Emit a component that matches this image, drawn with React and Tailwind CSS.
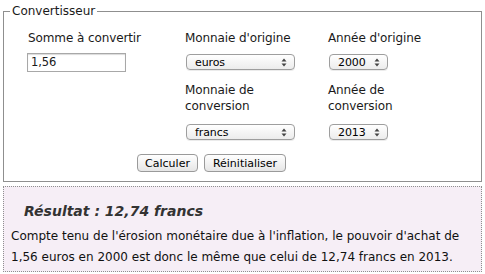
import React from "react";

const font = { fontFamily: '"DejaVu Sans", Verdana, sans-serif' };

function Arrows() {
  return (
    <svg width="6" height="9" viewBox="0 0 6 9" className="shrink-0">
      <path d="M3 0.5 L5.5 3.5 L0.5 3.5 Z" fill="#444" />
      <path d="M3 8.5 L5.5 5.5 L0.5 5.5 Z" fill="#444" />
    </svg>
  );
}

function FakeSelect({ value, w }) {
  return (
    <div
      className={`${w} h-[16px] flex items-center justify-between rounded-[4px] border border-[#9e9e9e] bg-gradient-to-b from-white to-[#ececec] pl-[8px] pr-[7px] text-[11px] leading-none text-black shadow-[0_1px_0_rgba(0,0,0,0.08)]`}
    >
      <span>{value}</span>
      <Arrows />
    </div>
  );
}

function Btn({ children, w }) {
  return (
    <div
      className={`${w} h-[18px] flex items-center justify-center rounded-[4px] border border-[#9a9a9a] bg-gradient-to-b from-white to-[#e6e6e6] text-[11px] leading-none text-black`}
    >
      {children}
    </div>
  );
}

export default function App() {
  return (
    <div style={font} className="w-[485px] h-[274px] bg-white px-[3px] pt-[4px] text-[#1a1a1a]">
      <fieldset className="w-[479px] h-[178px] border border-[#8f8f8f] px-[6px]">
        <legend className="px-[2px] text-[12px] leading-[15px]">Convertisseur</legend>
        <div className="grid grid-cols-[158px_143px_1fr] pl-[17px] pt-[12px] text-[12px] tracking-[-0.1px]">
          <div className="pl-[1px] leading-[15px]">Somme à convertir</div>
          <div className="leading-[15px]">Monnaie d'origine</div>
          <div className="leading-[15px]">Année d'origine</div>

          <div className="pt-[7px]">
            <div className="w-[99px] h-[19px] border border-[#a8a8a8] shadow-[inset_0_1px_1px_rgba(0,0,0,0.15)] pl-[3px] flex items-center text-[11.5px]">
              1,56
            </div>
          </div>
          <div className="pt-[8px] pl-[1px]">
            <FakeSelect value="euros" w="w-[109px]" />
          </div>
          <div className="pt-[8px] pl-[1px]">
            <FakeSelect value="2000" w="w-[59px]" />
          </div>

          <div />
          <div className="pt-[10px] leading-[16px]">
            Monnaie de
            <br />
            conversion
          </div>
          <div className="pt-[10px] leading-[16px]">
            Année de
            <br />
            conversion
          </div>

          <div />
          <div className="pt-[10px] pl-[1px]">
            <FakeSelect value="francs" w="w-[109px]" />
          </div>
          <div className="pt-[10px] pl-[1px]">
            <FakeSelect value="2013" w="w-[59px]" />
          </div>
        </div>
        <div className="flex gap-[6px] pl-[127px] pt-[14px]">
          <Btn w="w-[61px]">Calculer</Btn>
          <Btn w="w-[82px]">Réinitialiser</Btn>
        </div>
      </fieldset>
      <div className="mt-[4px] w-[479px] h-[86px] border border-dotted border-[#8f8f8f] bg-[#f6eef6] pl-[7px] pt-[15px]">
        <div className="pl-[13px] text-[14px] leading-[18px] font-bold italic text-[#333]">
          Résultat : 12,74 francs
        </div>
        <p className="pt-[6px] text-[12px] leading-[21px] text-[#111]">
          Compte tenu de l'érosion monétaire due à l'inflation, le pouvoir d'achat de 1,56 euros en 2000 est donc le même que celui de 12,74 francs en 2013.
        </p>
      </div>
    </div>
  );
}
